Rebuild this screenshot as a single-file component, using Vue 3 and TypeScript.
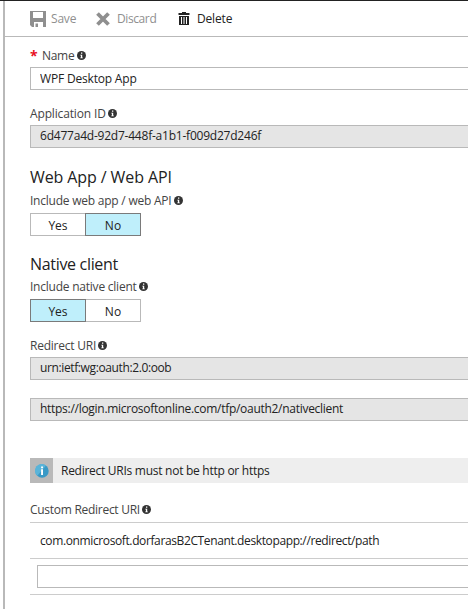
<script setup lang="ts">
import { defineComponent, h, ref } from 'vue'

const name = ref('WPF Desktop App')
const newUri = ref('')
const webApp = ref(false)
const nativeClient = ref(true)

const InfoDot = defineComponent({
  setup: () => () =>
    h('svg', { class: 'info-dot', width: 9, height: 9, viewBox: '0 0 9 9', 'aria-hidden': 'true' }, [
      h('circle', { cx: 4.5, cy: 4.5, r: 4.5, fill: '#333' }),
      h('path', { d: 'M4 1.5h1.3v1.2H4zM3.3 3.7h1.9v2.8h.6v.8H3.3v-.8h.6V4.5h-.6z', fill: '#fff' }),
    ]),
})
</script>

<template>
  <main class="blade">
    <nav class="toolbar">
      <button class="command save" disabled>
        <svg width="16" height="16" viewBox="0 0 16 16">
          <path fill="#8f8f8f" fill-rule="evenodd" d="M0 0h16v16h-3v-5H4v5H2l-2-2zM3 1v6h10V1z" />
          <path fill="#8f8f8f" d="M5.5 12.5h2.5V16H5.5z" />
        </svg>
        <span>Save</span>
      </button>
      <button class="command discard" disabled>
        <svg width="14" height="14" viewBox="0 0 14 14">
          <path fill="none" stroke="#8f8f8f" stroke-width="3.8" d="M1.5 1.5 12.5 12.5M12.5 1.5 1.5 12.5" />
        </svg>
        <span>Discard</span>
      </button>
      <button class="command delete">
        <svg width="12" height="14" viewBox="0 0 12 14">
          <path fill="#222" fill-rule="evenodd" d="M4 0h4v1h3.5v2H.5V1H4zM1 4h10v9H1zM3 5v7h1V5zM5.5 5v7h1V5zM8 5v7h1V5z" />
        </svg>
        <span>Delete</span>
      </button>
    </nav>

    <section class="form">
      <label class="label name-label"><b class="required">*</b><span class="t-name">Name</span><InfoDot /></label>
      <input v-model="name" class="field t-value" aria-label="Name" />

      <label class="label id-label"><span class="t-id">Application ID</span><InfoDot /></label>
      <div class="field readonly t-guid">6d477a4d-92d7-448f-a1b1-f009d27d246f</div>

      <h2 class="heading web-heading">Web App / Web API</h2>
      <label class="label web-label"><span>Include web app / web API</span><InfoDot /></label>
      <div class="toggle">
        <button :class="{ on: webApp }" @click="webApp = true">Yes</button>
        <button :class="{ on: !webApp }" @click="webApp = false">No</button>
      </div>

      <h2 class="heading native-heading">Native client</h2>
      <label class="label native-label"><span>Include native client</span><InfoDot /></label>
      <div class="toggle">
        <button :class="{ on: nativeClient }" @click="nativeClient = true">Yes</button>
        <button :class="{ on: !nativeClient }" @click="nativeClient = false">No</button>
      </div>

      <label class="label redirect-label"><span>Redirect URI</span><InfoDot /></label>
      <div class="field readonly t-urn">urn:ietf:wg:oauth:2.0:oob</div>
      <div class="field readonly second t-https">https://login.microsoftonline.com/tfp/oauth2/nativeclient</div>

      <div class="notice">
        <span class="notice-icon">
          <svg width="14" height="14" viewBox="0 0 14 14">
            <circle cx="7" cy="7" r="6.7" fill="#3999c6" />
            <path fill="#59b4d9" d="M2.3 11.8A6.7 6.7 0 0 1 11 1.6z" />
            <path fill="#fff" d="M6.1 2.6h1.9v1.7H6.1zM6.1 5.3h1.9v5.8H6.1z" />
          </svg>
        </span>
        <span class="notice-text">Redirect URIs must not be http or https</span>
      </div>

      <label class="label custom-label"><span>Custom Redirect URI</span><InfoDot /></label>
      <div class="row uri">com.onmicrosoft.dorfarasB2CTenant.desktopapp://redirect/path</div>
      <div class="row entry">
        <input v-model="newUri" class="field" aria-label="Custom Redirect URI" />
      </div>
    </section>
  </main>
</template>

<style>
body {
  background: #fff;
  overflow: hidden;
}
</style>

<style scoped>
.blade,
.blade * {
  box-sizing: border-box;
}
.blade {
  height: 609px;
  padding-left: 3px;
  border-top: 1px solid #222;
  overflow: hidden;
  font: 12px/16px "Open Sans", "Noto Sans", sans-serif;
  color: #222;
}
button,
input {
  margin: 0;
  font: inherit;
  color: inherit;
  border-radius: 0;
  outline: none;
}
.toolbar {
  display: flex;
  height: 36px;
  padding-left: 25px;
  border-left: 2px solid #b9b9b9;
  border-bottom: 1px solid #b9b9b9;
}
.command {
  display: flex;
  align-items: center;
  padding: 0;
  border: 0;
  background: none;
}
.command:disabled {
  color: #8f8f8f;
}
.save {
  gap: 5px;
  width: 66px;
  letter-spacing: -0.2px;
}
.discard {
  gap: 7px;
  width: 82px;
  letter-spacing: -0.4px;
}
.delete {
  gap: 7px;
  letter-spacing: -0.17px;
}
.form {
  height: 572px;
  padding: 11px 0 0 25px;
  border-left: 2px solid #b9b9b9;
}
.label {
  display: flex;
  align-items: center;
  gap: 3px;
  height: 16px;
  color: #444;
  letter-spacing: -0.23px;
}
.info-dot {
  margin: 0 0 1px -0.6px;
}
.name-label {
  margin-bottom: 3px;
}
.required {
  width: 9px;
  height: 16px;
  font-size: 14px;
  color: #e81123;
}
.t-name {
  letter-spacing: -0.3px;
}
.field {
  display: block;
  width: 100%;
  height: 23px;
  padding: 0 9px;
  border: 1px solid #b9b9b9;
  border-right: 0;
  background: #fff;
  line-height: 20px;
}
.readonly {
  background: #e5e5e5;
}
.t-value {
  letter-spacing: -0.18px;
}
.id-label {
  margin: 16px 0 3px;
}
.t-id {
  letter-spacing: -0.15px;
}
.t-guid {
  letter-spacing: -0.22px;
}
.heading {
  margin: 0;
  font-size: 16px;
  line-height: 22px;
  font-weight: 400;
}
.web-heading {
  margin-top: 18px;
  letter-spacing: -0.1px;
}
.web-label {
  margin: 5px 0 4px;
}
.toggle {
  display: flex;
  width: 111px;
  height: 23px;
}
.toggle button {
  width: 56px;
  padding: 2px 0 0;
  border: 1px solid #b9b9b9;
  background: #fff;
  line-height: 20px;
}
.toggle button + button {
  margin-left: -1px;
}
.toggle .on {
  position: relative;
  border-color: #7a7a7a;
  background: #bfeffb;
}
.native-heading {
  margin-top: 17px;
  letter-spacing: -0.32px;
}
.native-label {
  margin: 4px 0 4px;
}
.redirect-label {
  margin: 16px 0 3px;
}
.t-urn {
  letter-spacing: -0.38px;
}
.second {
  margin-top: 18px;
}
.t-https {
  letter-spacing: -0.285px;
}
.notice {
  display: flex;
  height: 25px;
  margin-top: 37px;
  background: #eee;
}
.notice-icon {
  display: flex;
  align-items: center;
  justify-content: center;
  width: 23px;
  background: #b9b9b9;
}
.notice-text {
  padding-left: 8px;
  line-height: 25px;
  letter-spacing: -0.27px;
}
.custom-label {
  margin: 19px 0 4px;
  letter-spacing: -0.28px;
}
.row {
  height: 36px;
  border-top: 1px solid #ccc;
}
.uri {
  padding-left: 10px;
  line-height: 36px;
  letter-spacing: -0.38px;
}
.entry {
  height: 37px;
  padding: 6px 0 0 7px;
  border-bottom: 1px solid #ccc;
}
</style>
